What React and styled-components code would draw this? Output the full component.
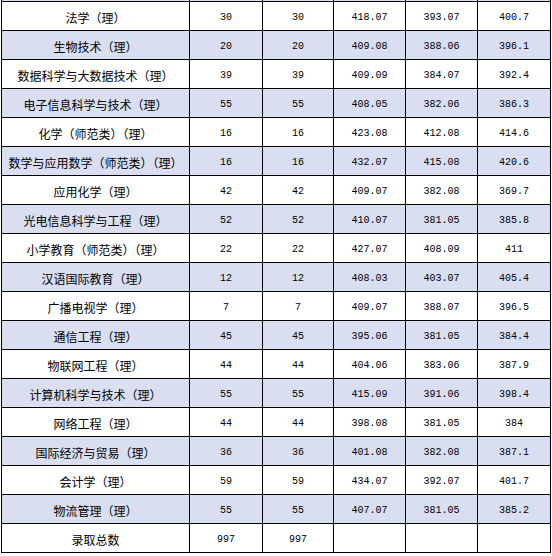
import React from "react";
import styled, { createGlobalStyle } from "styled-components";

const GlobalStyle = createGlobalStyle`
  html, body {
    margin: 0;
    padding: 0;
    background: #ffffff;
  }
  body {
    font-family: "Noto Sans CJK SC", "Noto Sans", sans-serif;
    color: #000;
  }
`;

const Viewport = styled.div`
  width: 552px;
  height: 556px;
  overflow: hidden;
  background: #ffffff;
`;

const Sheet = styled.div`
  display: grid;
  grid-template-columns: 187px 72px 70px 71px 71px 72px;
  grid-auto-rows: 28px;
  gap: 1px;
  padding: 1px;
  width: max-content;
  background: #000;
  margin: -28px 0 0 1px;
`;

const Cell = styled.div`
  display: flex;
  align-items: center;
  justify-content: center;
  padding-top: 4px;
  box-sizing: border-box;
  white-space: nowrap;
  background: ${(p) => (p.$shaded ? "#d9dff1" : "#ffffff")};
  color: #000;
`;

const NameCell = styled(Cell)`
  font-family: "Noto Sans CJK SC", "Noto Sans", sans-serif;
  font-size: 12px;
  line-height: 14px;
`;

const NumCell = styled(Cell)`
  font-family: "Liberation Mono", "DejaVu Sans Mono", monospace;
  font-size: 10px;
  line-height: 14px;
`;

const rows = [
  ["法学（理）", "30", "30", "418.07", "393.07", "400.7"],
  ["生物技术（理）", "20", "20", "409.08", "388.06", "396.1"],
  ["数据科学与大数据技术（理）", "39", "39", "409.09", "384.07", "392.4"],
  ["电子信息科学与技术（理）", "55", "55", "408.05", "382.06", "386.3"],
  ["化学（师范类）（理）", "16", "16", "423.08", "412.08", "414.6"],
  ["数学与应用数学（师范类）（理）", "16", "16", "432.07", "415.08", "420.6"],
  ["应用化学（理）", "42", "42", "409.07", "382.08", "369.7"],
  ["光电信息科学与工程（理）", "52", "52", "410.07", "381.05", "385.8"],
  ["小学教育（师范类）（理）", "22", "22", "427.07", "408.09", "411"],
  ["汉语国际教育（理）", "12", "12", "408.03", "403.07", "405.4"],
  ["广播电视学（理）", "7", "7", "409.07", "388.07", "396.5"],
  ["通信工程（理）", "45", "45", "395.06", "381.05", "384.4"],
  ["物联网工程（理）", "44", "44", "404.06", "383.06", "387.9"],
  ["计算机科学与技术（理）", "55", "55", "415.09", "391.06", "398.4"],
  ["网络工程（理）", "44", "44", "398.08", "381.05", "384"],
  ["国际经济与贸易（理）", "36", "36", "401.08", "382.08", "387.1"],
  ["会计学（理）", "59", "59", "434.07", "392.07", "401.7"],
  ["物流管理（理）", "55", "55", "407.07", "381.05", "385.2"],
  ["录取总数", "997", "997", "", "", ""],
];

// a row scrolled mostly out of view above, shaded like the alternating rows
const allRows = [["", "", "", "", "", ""], ...rows];

export default function App() {
  return (
    <>
      <GlobalStyle />
      <Viewport>
        <Sheet>
          {allRows.map((r, i) => {
            const shaded = i % 2 === 0;
            return (
              <React.Fragment key={i}>
                <NameCell $shaded={shaded}>{r[0]}</NameCell>
                {r.slice(1).map((v, j) => (
                  <NumCell key={j} $shaded={shaded}>
                    {v}
                  </NumCell>
                ))}
              </React.Fragment>
            );
          })}
        </Sheet>
      </Viewport>
    </>
  );
}
